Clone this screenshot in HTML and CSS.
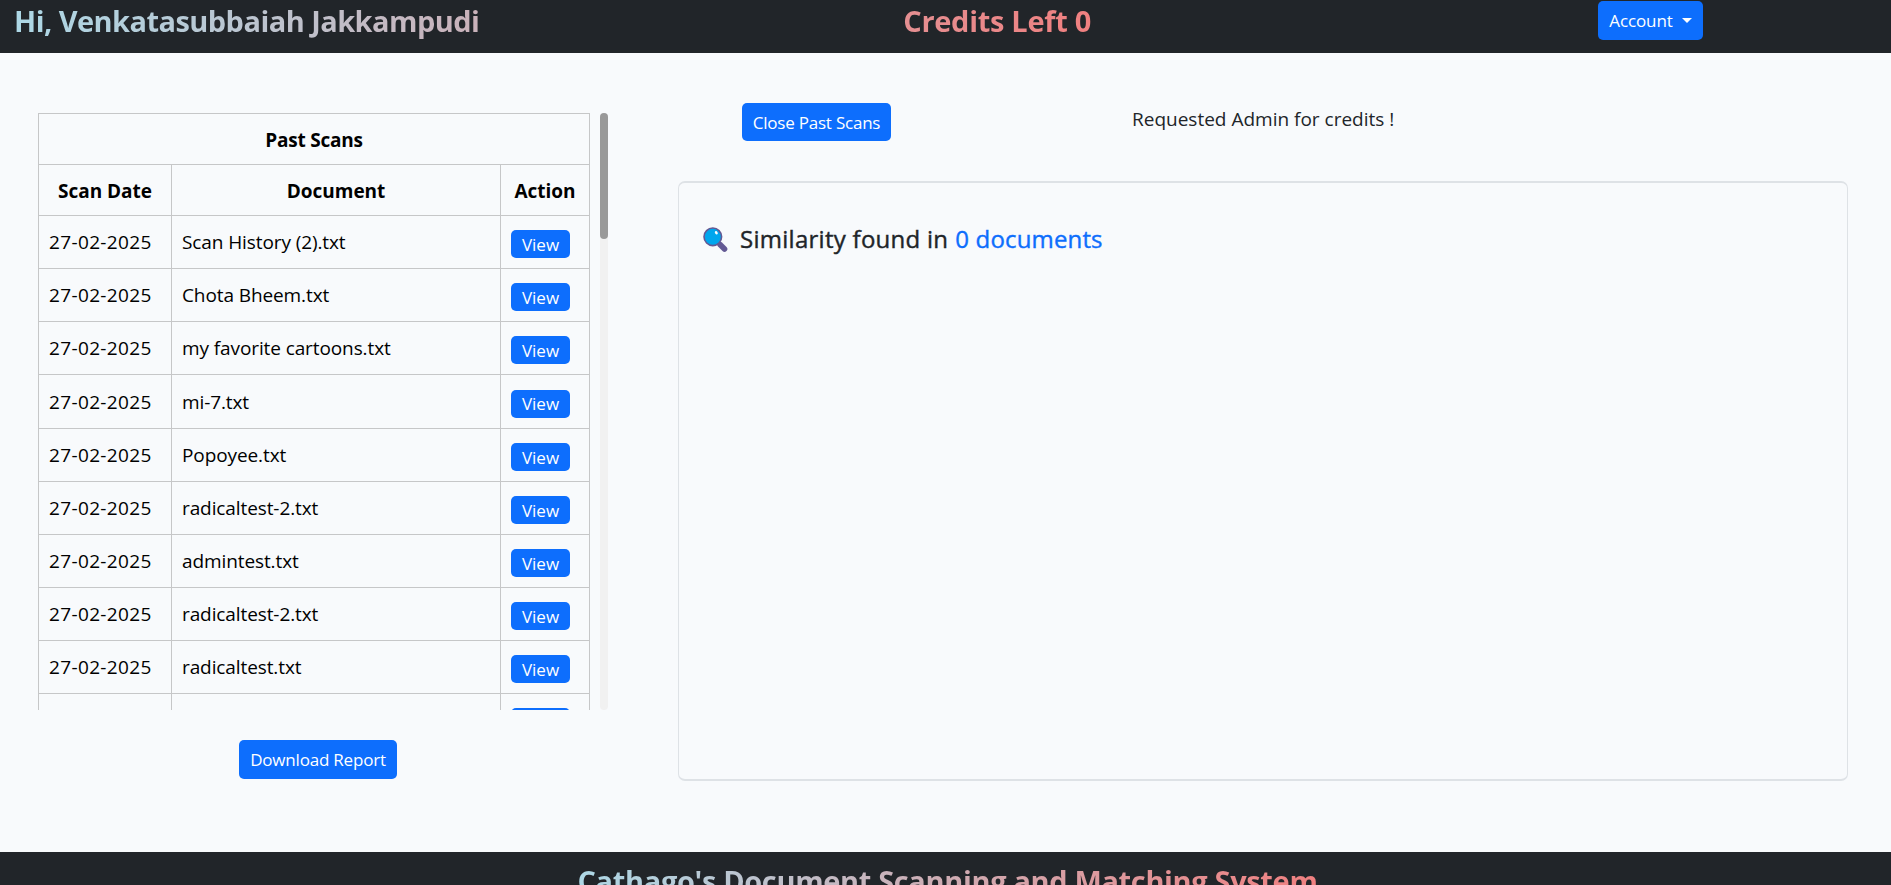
FILE: index.html
```html
<!DOCTYPE html>
<html lang="en">
<head>
<meta charset="utf-8">
<title>Document Scanning</title>
<link rel="stylesheet" href="styles.css">
</head>
<body>
<header class="topbar">
  <h1 class="banner"><span class="greeting">Hi, Venkatasubbaiah Jakkampudi</span><span class="credits">Credits Left 0</span></h1>
  <button class="btn account">Account<span class="caret"></span></button>
</header>
<main class="content">
  <section class="history">
    <div class="scroller">
      <table class="scans">
        <colgroup><col class="col-date"><col class="col-doc"><col class="col-action"></colgroup>
        <thead>
          <tr><th class="title" colspan="3">Past Scans</th></tr>
          <tr><th>Scan Date</th><th>Document</th><th>Action</th></tr>
        </thead>
        <tbody>
          <tr><td class="date">27-02-2025</td><td>Scan History (2).txt</td><td><button class="btn view">View</button></td></tr>
          <tr><td class="date">27-02-2025</td><td>Chota Bheem.txt</td><td><button class="btn view">View</button></td></tr>
          <tr><td class="date">27-02-2025</td><td>my favorite cartoons.txt</td><td><button class="btn view">View</button></td></tr>
          <tr><td class="date">27-02-2025</td><td>mi-7.txt</td><td><button class="btn view">View</button></td></tr>
          <tr><td class="date">27-02-2025</td><td>Popoyee.txt</td><td><button class="btn view">View</button></td></tr>
          <tr><td class="date">27-02-2025</td><td>radicaltest-2.txt</td><td><button class="btn view">View</button></td></tr>
          <tr><td class="date">27-02-2025</td><td>admintest.txt</td><td><button class="btn view">View</button></td></tr>
          <tr><td class="date">27-02-2025</td><td>radicaltest-2.txt</td><td><button class="btn view">View</button></td></tr>
          <tr><td class="date">27-02-2025</td><td>radicaltest.txt</td><td><button class="btn view">View</button></td></tr>
          <tr><td></td><td></td><td><button class="btn view" aria-label="View"></button></td></tr>
        </tbody>
      </table>
      <div class="track"><div class="thumb"></div></div>
    </div>
    <button class="btn download">Download Report</button>
  </section>
  <section class="results">
    <div class="toolbar">
      <button class="btn close">Close Past Scans</button>
      <p class="notice">Requested Admin for credits !</p>
    </div>
    <div class="card">
      <h2 class="summary">
        <svg class="lens" viewBox="0 0 25 25" width="25" height="25">
          <path d="M17 17.5L21.5 22" stroke="#635994" stroke-width="5.6" stroke-linecap="round"/>
          <circle cx="9.8" cy="9.8" r="8.8" fill="#00a6ed" stroke="#635994" stroke-width="1.6"/>
          <ellipse cx="13.3" cy="5.7" rx="1.3" ry="1.8" fill="#fff" transform="rotate(-35 13.3 5.7)"/>
        </svg>
        <span class="label">Similarity found in</span><span class="count">0 documents</span>
      </h2>
    </div>
  </section>
</main>
<footer class="footer"><span class="footer-title">Cathago's Document Scanning and Matching System</span></footer>
</body>
</html>
```
FILE: styles.css
```css
* { box-sizing: border-box; }
body {
  margin: 0;
  height: 885px;
  overflow: hidden;
  display: flex;
  flex-direction: column;
  background: #f8fafc;
  color: #212529;
  font-family: "Segoe UI", "Open Sans", "Noto Sans", sans-serif;
  font-size: 19px;
}
.topbar {
  flex: none;
  height: 53px;
  display: flex;
  align-items: flex-start;
  justify-content: space-between;
  padding: 1px 188px 0 14px;
  background: #212529;
}
.banner {
  display: flex;
  justify-content: space-between;
  width: 1077px;
  margin: 0;
  font-size: 29px;
  font-weight: 700;
  line-height: 40px;
  white-space: nowrap;
  background: linear-gradient(to right, lightblue, lightcoral);
  background-clip: text;
  -webkit-background-clip: text;
  color: transparent;
}
.greeting { letter-spacing: -0.55px; }
.credits { letter-spacing: -0.3px; }
.btn {
  display: block;
  padding: 0;
  border: 0;
  border-radius: 5px;
  background: #0d6efd;
  color: #fff;
  font-family: inherit;
  font-size: 17px;
  text-align: center;
  white-space: nowrap;
}
.account {
  width: 105px;
  height: 39px;
  display: flex;
  align-items: center;
  justify-content: center;
  gap: 9px;
  letter-spacing: -0.1px;
}
.caret {
  border: 5px solid transparent;
  border-top-color: #fff;
  border-bottom: 0;
}
.content {
  flex: none;
  height: 799px;
  display: flex;
}
.history {
  width: 678px;
  padding: 60px 0 0 38px;
}
.scroller {
  height: 597px;
  display: flex;
  gap: 10px;
  overflow: hidden;
}
.scans {
  flex: none;
  align-self: flex-start;
  width: 552px;
  table-layout: fixed;
  border-collapse: collapse;
  color: #000;
}
.col-date { width: 133px; }
.col-doc { width: 329px; }
.col-action { width: 89px; }
.scans th,
.scans td {
  border: 1px solid #c6c7c8;
  padding: 0 10px;
  white-space: nowrap;
}
.scans th {
  height: 51px;
  padding: 2px 0 0;
  text-align: center;
}
.scans .title { letter-spacing: -0.2px; }
.scans td {
  height: 53px;
  text-align: left;
  letter-spacing: -0.1px;
}
.scans tr:nth-child(4) td { height: 54px; }
.scans .date { letter-spacing: 0.36px; }
.view {
  width: 59px;
  height: 28px;
  margin-top: 4px;
}
.track {
  width: 8px;
  height: 597px;
  border-radius: 4px;
  background: #f1f1f1;
}
.thumb {
  height: 126px;
  border-radius: 4px;
  background: #999;
}
.download {
  width: 158px;
  height: 39px;
  margin: 30px 0 0 201px;
  letter-spacing: -0.2px;
}
.results { width: 1170px; }
.toolbar {
  height: 128px;
  display: flex;
  align-items: flex-start;
  padding: 50px 0 0 64px;
}
.close {
  width: 149px;
  height: 38px;
  letter-spacing: -0.22px;
}
.notice {
  margin: 0 0 0 241px;
  line-height: 32px;
  white-space: nowrap;
}
.card {
  height: 600px;
  border: solid #dee2e6;
  border-width: 2px 1px;
  border-radius: 7px;
  padding: 36px 24px;
}
.summary {
  display: flex;
  align-items: center;
  margin: 0;
  font-size: 24px;
  font-weight: 500;
  line-height: 40px;
  white-space: nowrap;
  -webkit-text-stroke: 0.4px currentColor;
}
.lens {
  margin: 1px 12px 0 0;
  fill: none;
}
.label { letter-spacing: 0.27px; }
.count {
  margin-left: 7px;
  letter-spacing: 0.15px;
  color: #0d6efd;
}
.footer {
  flex: none;
  height: 33px;
  padding: 8px 0 0 4px;
  overflow: hidden;
  background: #212529;
  text-align: center;
}
.footer-title {
  display: inline-block;
  font-size: 29px;
  font-weight: 700;
  line-height: 42px;
  letter-spacing: -0.35px;
  white-space: nowrap;
  background: linear-gradient(to right, lightblue, lightcoral);
  background-clip: text;
  -webkit-background-clip: text;
  color: transparent;
}
```
